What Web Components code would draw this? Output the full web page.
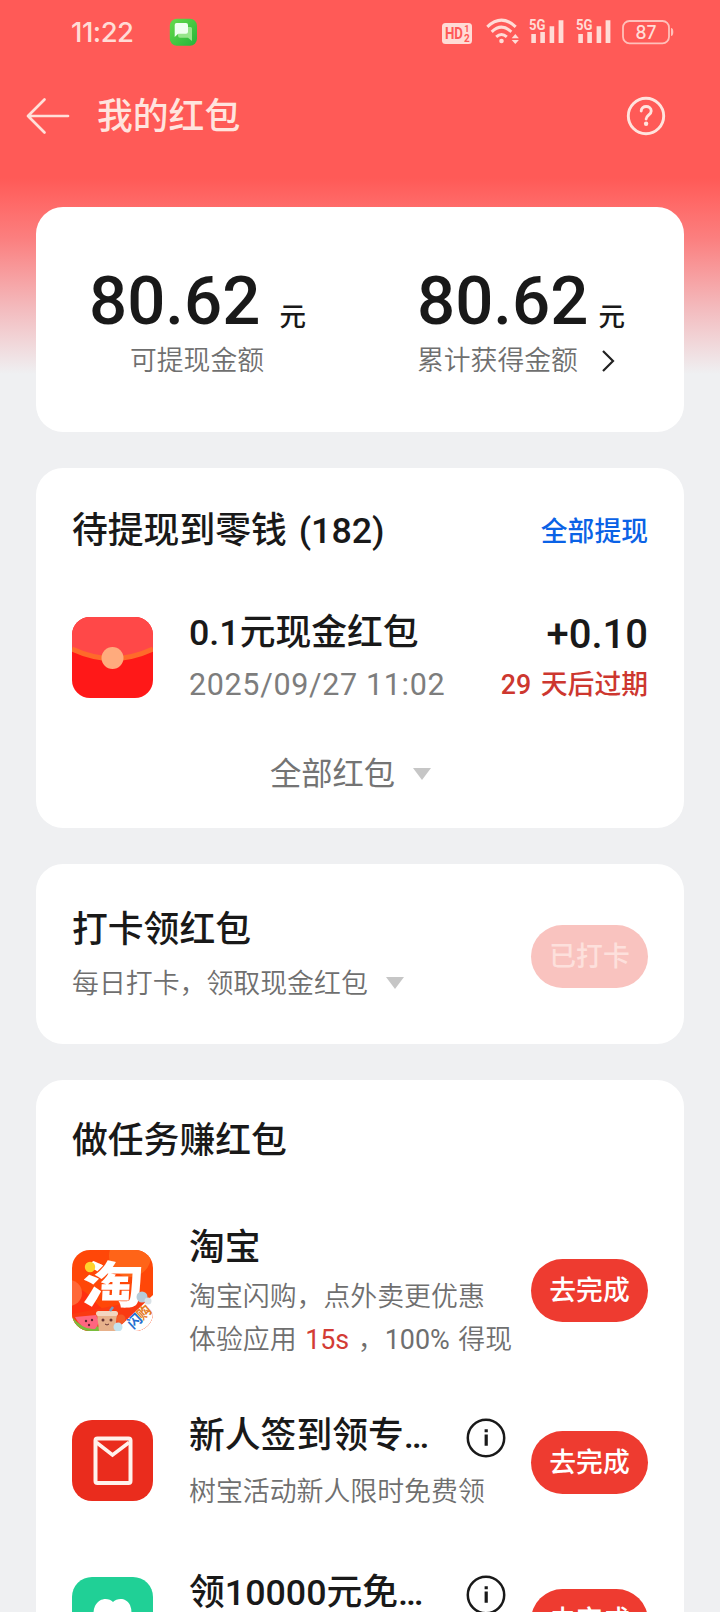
<!DOCTYPE html>
<html lang="zh-CN">
<head>
<meta charset="utf-8">
<title>我的红包</title>
<style>
html,body{margin:0;height:1612px;overflow:hidden;background:#eff0f2}
body{font-family:Roboto,"Noto Sans CJK SC",sans-serif;color:#191919}
</style>
</head>
<body>
<rp-page>
  <status-bar slot="top"></status-bar>
  <page-header slot="top">我的红包</page-header>

  <rp-card style="--h:225px">
    <balance-pair></balance-pair>
  </rp-card>

  <rp-card style="--h:360px;--pt:39px">
    <card-head>待提现到零钱 (182)<a slot="action">全部提现</a></card-head>
    <packet-row amount="+0.10" expire="29 天后过期" date="2025/09/27 11:02">0.1元现金红包</packet-row>
    <more-toggle>全部红包</more-toggle>
  </rp-card>

  <rp-card style="--h:180px;--pt:42px">
    <checkin-row>打卡领红包<span slot="sub">每日打卡，领取现金红包</span><rp-button slot="action" done>已打卡</rp-button></checkin-row>
  </rp-card>

  <rp-card style="--h:600px;--pt:37px">
    <card-head>做任务赚红包</card-head>
    <task-row style="--mt:59px;--icon:26px;--btn:35px;--gap:7px">
      <app-icon slot="icon" name="taobao"></app-icon>淘宝
      <span slot="sub">淘宝闪购，点外卖更优惠</span>
      <span slot="extra">体验应用 <b style="font-weight:400;color:#d33c35">15s</b> ，<b style="font-weight:400">100%</b> 得现</span>
      <rp-button slot="action">去完成</rp-button>
    </task-row>
    <task-row info style="--mt:54px;--btn:19px">
      <app-icon slot="icon" name="mail"></app-icon>新人签到领专…
      <span slot="sub">树宝活动新人限时免费领</span>
      <rp-button slot="action">去完成</rp-button>
    </task-row>
    <task-row info style="--mt:59px;--btn:20px">
      <app-icon slot="icon" name="heart"></app-icon>领10000元免…
      <rp-button slot="action">去完成</rp-button>
    </task-row>
  </rp-card>
</rp-page>

<script>
const define = (name, html) => customElements.define(name, class extends HTMLElement {
  constructor() {
    super();
    const t = document.createElement('template');
    t.innerHTML = typeof html === 'function' ? html(this) : html;
    this.attachShadow({mode: 'open'}).appendChild(t.content.cloneNode(true));
  }
});

define('rp-page', `<style>
:host{display:block;width:720px;height:1612px;overflow:hidden;
background:linear-gradient(180deg,#ff5a57 0,#ff5a57 178px,#ff6664 198px,#fb8080 240px,#f3bcbf 310px,#eff0f2 374px)}
.top{height:207px}
main{display:flex;flex-direction:column;gap:36px;padding:0 36px}
</style><div class="top"><slot name="top"></slot></div><main><slot></slot></main>`);

const signal = `<svg width="36" height="28" viewBox="0 0 36 28">
<text x="0" y="14.2" font-family="Roboto" font-size="15" font-weight="700" textLength="16.5" lengthAdjust="spacingAndGlyphs">5G</text>
<path d="M2.3 18h4.6v9H2.3zM11.3 16h4.6v11h-4.6zM20.6 10.300h4.600v16.700h-4.600zM29.600 4.200h4.800v22.800h-4.800z"/></svg>`;

define('status-bar', `<style>
:host{display:flex;height:64px;box-sizing:border-box;padding-top:16px;align-items:flex-start;color:#ffdcd6;fill:#ffdcd6}
time{font:500 27.500px/32px Inter,sans-serif;letter-spacing:-.5px;margin-left:71px;width:98px}
svg{display:block;flex:none}
</style>
<time>11:22</time>
<svg width="28" height="32" viewBox="0 0 28 32">
 <defs><linearGradient id="g" x1="0" y1="0" x2="1" y2="1"><stop offset="0" stop-color="#66db4b"/><stop offset="1" stop-color="#25b43a"/></linearGradient></defs>
 <rect x=".8" y="2.800" width="27.200" height="27" rx="7" fill="url(#g)"/>
 <path d="M11 11h10.500q1.500 0 1.500 1.500V25l-4-3.200h-8q-2 0-2-2V13q0-2 2-2z" fill="#96e58b"/>
 <path d="M7.500 7H17q2 0 2 2v6.700q0 2-2 2H9.200L5.700 21V9q0-2 1.800-2z" fill="#effff0"/>
</svg>
<svg style="margin-left:245px" width="30" height="32" viewBox="0 0 30 32">
 <rect x="0" y="7" width="30" height="21" rx="3.500"/>
 <g fill="#ff5a57" font-family="Roboto" font-weight="700"><text x="3" y="23.200" font-size="16.500" textLength="18" lengthAdjust="spacingAndGlyphs">HD</text>
 <text x="22.300" y="16" font-size="9">1</text><text x="22" y="25.500" font-size="10">2</text></g>
</svg>
<svg style="margin-left:14px" width="34" height="32" viewBox="0 0 34 32">
 <g fill="none" stroke="#ffdcd6" stroke-width="3"><path d="M1.300 10.800Q15.500-2.600 29.700 10.800"/><path d="M5.700 15.800Q15.500 6.500 25.300 15.800"/><path d="M10.200 20.800Q15.500 16.300 20.800 20.800"/></g>
 <circle cx="15.500" cy="25" r="2.300"/><path d="M25.700 22.200L29.300 18l3.600 4.200zM25.700 24h7.200l-3.600 4z"/>
</svg>
<div style="margin:0 0 0 9px">${signal}</div><div style="margin:0 0 0 11px">${signal}</div>
<svg style="margin-left:10px" width="52" height="32" viewBox="0 0 52 32">
 <rect x="1" y="5" width="46" height="22.300" rx="6.500" fill="none" stroke="#ffc0ba" stroke-width="1.800"/>
 <path d="M49 12q2.300 0 2.300 4t-2.300 4z" fill="#ffc0ba"/>
 <text x="24" y="23" text-anchor="middle" font-family="Inter" font-size="18.500" font-weight="500" textLength="21" lengthAdjust="spacingAndGlyphs">87</text>
</svg>`);

define('page-header', `<style>
:host{display:flex;align-items:center;height:104px;color:#ffe4de;padding:0 54px 0 26px}
h1{font-size:35.800px;line-height:48px;font-weight:500;margin:2px 0 0 26px;flex:1}
svg{display:block;flex:none}
</style>
<svg width="45" height="40" viewBox="0 0 45 40" fill="none" stroke="#ffe0d9" stroke-width="2.700" stroke-linecap="round" stroke-linejoin="round"><path d="M42 20H2M18.500 3.500L2 20l16.500 16.500"/></svg>
<h1><slot></slot></h1>
<svg width="40" height="40" viewBox="0 0 40 40" fill="none" stroke="#ffe4de" stroke-width="2.900" stroke-linecap="round"><circle cx="20" cy="20" r="17.700"/><path d="M15.200 15c0-6 10-5.800 10-.1 0 4-5.100 4.400-5.100 8.100"/><circle cx="20.100" cy="27.700" r="2.200" fill="#ffe4de" stroke="none"/></svg>`);

define('rp-card', `<style>
:host{display:block;flex:none;box-sizing:border-box;height:var(--h);padding:var(--pt,0) 36px 0;background:#fff;border-radius:27px}
</style><slot></slot>`);

define('balance-pair', `<style>
:host{display:flex;height:225px;box-sizing:border-box;padding-top:57px}
.col{display:flex;flex-direction:column}
.l{width:328px;padding-left:17px}
.v{display:flex;align-items:baseline;height:74px;line-height:74px;font-size:67.200px;font-weight:500}
i{font-style:normal;font-size:26.500px;line-height:36px;position:relative;top:2px}
.s{display:flex;align-items:center;font-size:26.800px;line-height:36px;color:#6f6f6f;font-weight:350;margin-top:5px}
</style>
<div class="col l"><div class="v">80.62<i style="margin-left:19px">元</i></div><div class="s" style="padding-left:41px">可提现金额</div></div>
<div class="col"><div class="v">80.62<i style="margin-left:10px">元</i></div><div class="s">累计获得金额
<svg style="margin-left:22px" width="16" height="24" viewBox="0 0 16 24" fill="none" stroke="#222" stroke-width="2.200"><path d="M3 2l10 10L3 22"/></svg></div></div>`);

define('card-head', `<style>
:host{display:flex;justify-content:space-between;font-size:35.800px;line-height:48px;font-weight:500;word-spacing:3px}
::slotted(a){font-size:26.800px;color:#0a62e6;position:relative;top:1px}
</style><span><slot></slot></span><slot name="action"></slot>`);

const art = {
packet:`<rect width="81" height="81" fill="#ff1818"/><path d="M0 0h81v32Q40.500 53 0 32z" fill="#ff4848"/><path d="M0 32Q40.500 51 81 32" fill="none" stroke="#ff6a2a" stroke-width="5"/><circle cx="40.500" cy="41" r="11" fill="#ffab7d"/>`,
mail:`<rect width="81" height="81" fill="#ea2c1d"/><rect x="23.500" y="18.500" width="35" height="44.500" rx="2" fill="none" stroke="#fff2ec" stroke-width="4"/><path d="M24.500 22.500L40.500 35l16.500-12.500" fill="none" stroke="#fff2ec" stroke-width="3.500"/>`,
heart:`<rect width="81" height="81" fill="#20d096"/><path d="M40.500 60L26 46q-7-8-3-17c5-9 14-8 18-4 4-4 13-5 17 3q4 10-3 18z" fill="#fff"/>`,
taobao:`<rect width="81" height="81" fill="#ff4708"/><path d="M0 38C25 38 20 70 60 64H0z" fill="#ff3010"/><circle cx="58" cy="6" r="21" fill="#ff6418"/><circle cx="-3" cy="43" r="13" fill="#ff6838"/><path d="M0 64L81 48v33H0z" fill="#fa3a12"/>
<text transform="translate(9.500 53) skewX(-3)" x="0" y="0" font-family="Noto Sans CJK SC" font-size="50" font-weight="800" fill="#fff" textLength="61" lengthAdjust="spacingAndGlyphs">淘</text>
<circle cx="18" cy="17" r="5.200" fill="#ffd32d"/>
<path d="M43 81L81 45v36z" fill="#fff"/><path d="M0 67q12 14 25 9l7 5H8Q2 77 0 67z" fill="#79bd3c"/><path d="M3 67l21-2q5 8-1 14Q9 80 3 67z" fill="#ff6680"/><g fill="#652633"><circle cx="14" cy="71" r="1.200"/><circle cx="20" cy="70" r="1.200"/><circle cx="17" cy="75" r="1.200"/></g>
<path d="M25 64q9-6 20 1l-2 16H27z" fill="#e7b18b"/><rect x="24" y="61" width="22" height="5" rx="2.500" fill="#f3d6c0"/><path d="M38 61l3-4" stroke="#6f9fca" stroke-width="2.500"/><circle cx="31" cy="70" r="1.500" fill="#633"/><circle cx="39" cy="70" r="1.500" fill="#633"/><path d="M33 74q2 2 4 0" stroke="#633" fill="none"/><circle cx="49" cy="69" r="4.500" fill="#f55b27"/><circle cx="46" cy="77" r="4.500" fill="#c4e3ef"/><circle cx="70" cy="47" r="5.500" fill="#b6cbd8"/><circle cx="76" cy="51" r="3.500" fill="#d9e1e6"/>
<g transform="translate(61 79.500) rotate(-43)" font-family="Noto Sans CJK SC" font-weight="700" font-size="14"><text fill="#276fd0" x="0">闪</text><text fill="#e57b25" x="13">购</text></g>`};

define('app-icon', el => `<style>
:host{display:block;width:81px;height:81px;border-radius:18px;overflow:hidden}
:host([name=mail]),:host([name=heart]){border-radius:20px}
svg{display:block}
</style><svg width="81" height="81" viewBox="0 0 81 81">${art[el.getAttribute('name')]}</svg>`);

define('packet-row', el => `<style>
:host{display:grid;grid-template-columns:81px 1fr auto;column-gap:36px;margin-top:54px;height:96px}
app-icon{margin-top:8px}
.n{font-size:35.800px;line-height:48px;font-weight:500}
.d{font-size:30.500px;line-height:40px;letter-spacing:.65px;color:#7d7d7d;margin-top:8px;white-space:nowrap}
.r{text-align:right;white-space:nowrap}
.a{font-size:40px;line-height:48px;font-weight:500;margin-top:2px}
.e{font-size:26.800px;line-height:36px;color:#cd372f;font-weight:500;margin-top:8px;word-spacing:3px}
</style><app-icon name="packet"></app-icon>
<div><div class="n"><slot></slot></div><div class="d">${el.getAttribute('date')}</div></div>
<div class="r"><div class="a">${el.getAttribute('amount')}</div><div class="e">${el.getAttribute('expire')}</div></div>`);

const tri = `<svg width="18" height="12" viewBox="0 0 18 12"><path d="M0 0h18L9 12z" fill="#c6c6c6"/></svg>`;

define('more-toggle', `<style>
:host{display:flex;justify-content:center;align-items:center;gap:18px;padding-right:19px;margin-top:49px;font-size:31.300px;line-height:42px;color:#747474}
svg{margin-bottom:2px}
</style><slot></slot>${tri}`);

define('checkin-row', `<style>
:host{display:flex;justify-content:space-between;font-size:35.800px;line-height:48px;font-weight:500}
.s{display:flex;align-items:center;gap:18px;margin-top:12px;font-size:26.900px;line-height:36px;font-weight:350;color:#6f6f6f}
.s svg{margin-bottom:2px}
.b{margin-top:19px}
</style><div><div><slot></slot></div><div class="s"><slot name="sub"></slot>${tri}</div></div><div class="b"><slot name="action"></slot></div>`);

define('rp-button', `<style>
:host{display:block;box-sizing:border-box;width:117px;height:63px;padding-top:1px;border-radius:32px;background:#ee3b30;color:#fff;font-size:26.800px;line-height:63px;font-weight:500;text-align:center}
:host([done]){background:#f9c3bf;color:#fde0dc}
</style><slot></slot>`);

define('task-row', el => `<style>
:host{display:grid;grid-template-columns:81px 1fr 117px;column-gap:36px;margin-top:var(--mt)}
.i{margin-top:var(--icon,8px)}
.t{width:342px;margin-right:-40px;display:flex;flex-direction:column}
.n{display:flex;justify-content:space-between;width:316.500px;font-size:35.800px;line-height:48px;font-weight:500;white-space:nowrap}
.n svg{margin:6px 0 0}
::slotted(span){display:block;font-size:26.900px;line-height:36px;font-weight:350;color:#6f6f6f;margin-top:var(--gap,14px);white-space:nowrap;word-spacing:2px}
.b{margin-top:var(--btn)}
</style><div class="i"><slot name="icon"></slot></div>
<div class="t"><div class="n"><span><slot></slot></span>${el.hasAttribute('info') ? `<svg width="40" height="40" viewBox="0 0 40 40"><circle cx="20" cy="20" r="18.200" fill="none" stroke="#191919" stroke-width="2.500"/><path d="M18.600 16.500h3.200v11.300h-3.200zM18.600 11.300h3.200v3h-3.200z" fill="#191919"/></svg>` : ''}</div>
<slot name="sub"></slot><slot name="extra"></slot></div>
<div class="b"><slot name="action"></slot></div>`);
</script>
</body>
</html>
